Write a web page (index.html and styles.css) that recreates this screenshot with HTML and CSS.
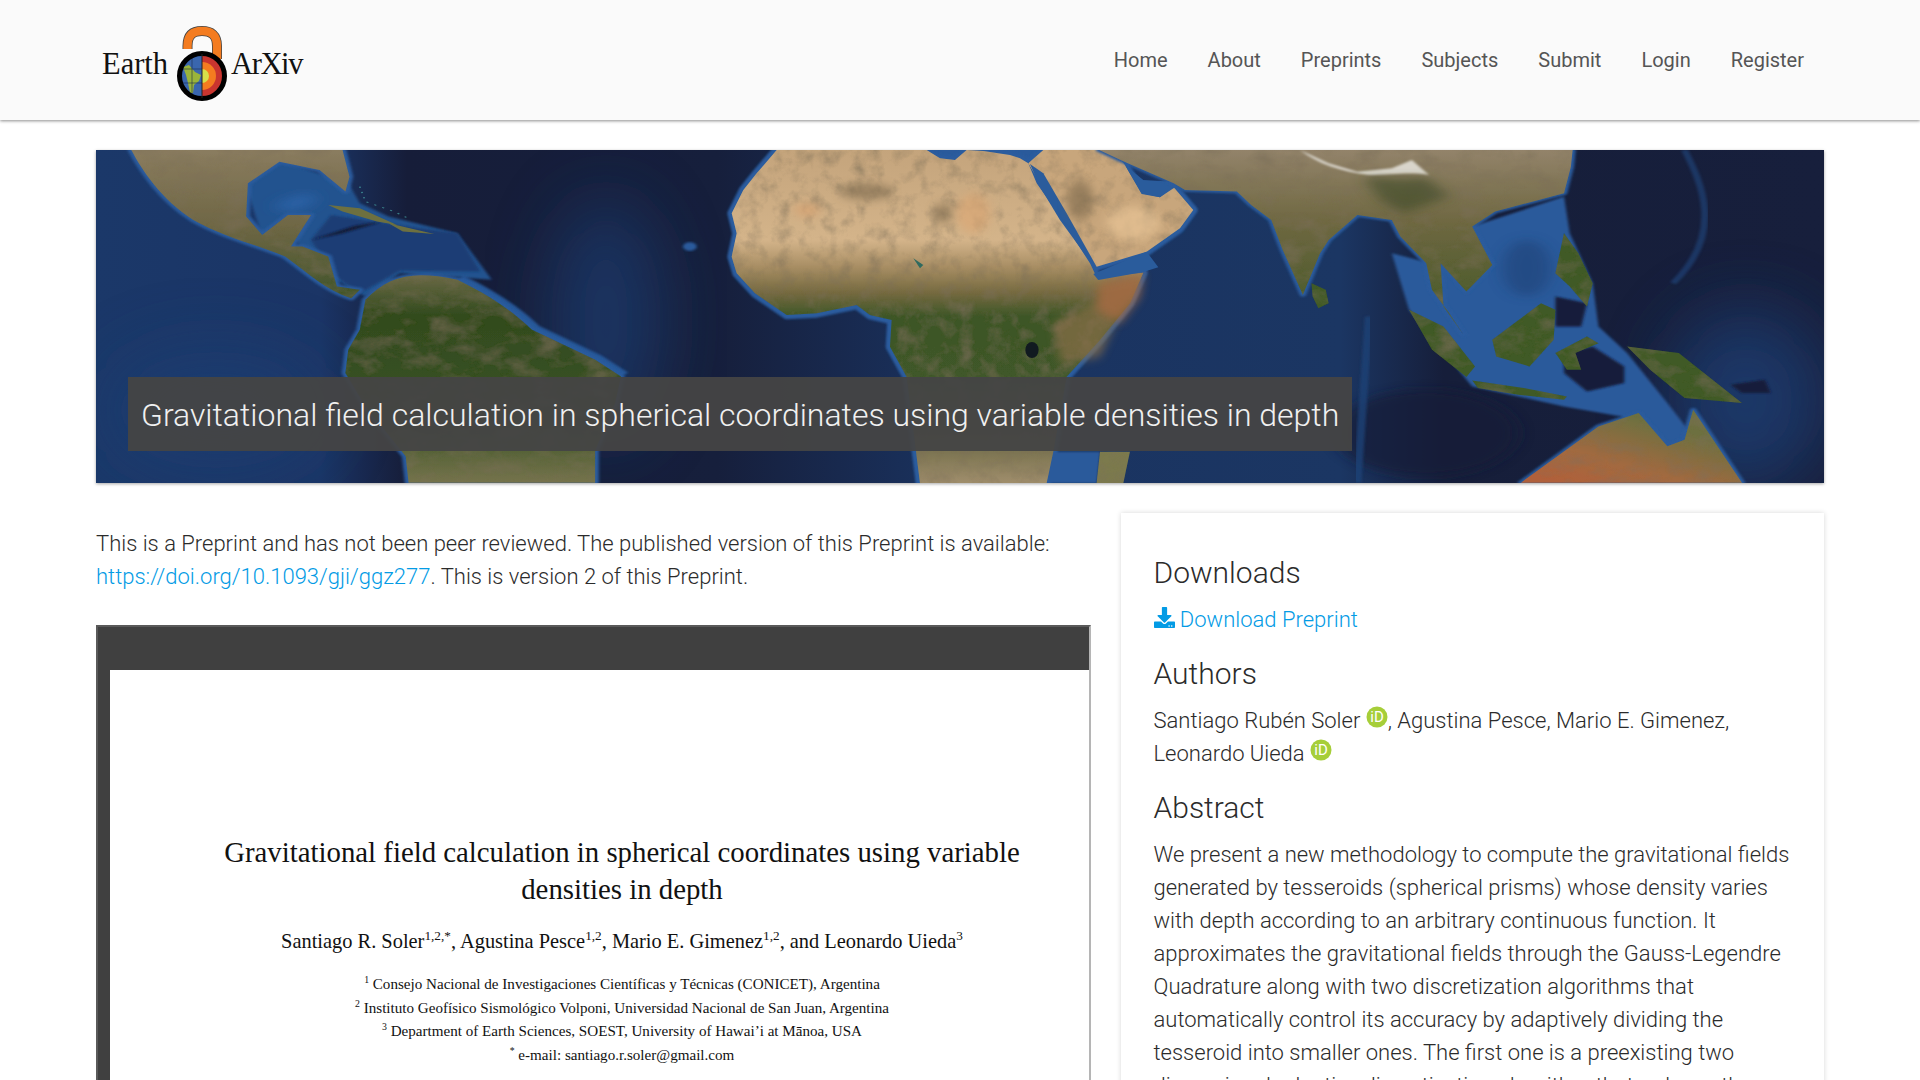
FILE: index.html
```html
<!DOCTYPE html>
<html lang="en">
<head>
    <meta charset="UTF-8">
    <meta name="viewport" content="width=device-width, initial-scale=1.0">
    <title>Gravitational field calculation in spherical coordinates using variable densities in depth</title>
    <link rel="stylesheet" href="styles.css">
</head>
<body>
    <header class="site-header">
        <a class="logo" href="#">
            <span class="logo-word">Earth</span>
            <svg class="logo-lock" viewBox="0 0 58 78" width="58" height="78">
                <path d="M14.5 24 V21 C14.5 10 20 6 29 6 C38 6 44 10 44 21 V34" fill="none" stroke="#444" stroke-width="10"/>
                <path d="M14.5 24 V21 C14.5 10 20 6 29 6 C38 6 44 10 44 21 V34" fill="none" stroke="#f47c20" stroke-width="8.4"/>
                <circle cx="29" cy="51" r="22" fill="#3a66ae"/>
                <path d="M29 29 A22 22 0 0 1 29 73 Z" fill="#c9352f"/>
                <path d="M29 37 A14 14 0 0 1 29 65 Z" fill="#f47c20"/>
                <path d="M29 44 A7 7 0 0 1 29 58 Z" fill="#d6e04a"/>
                <path d="M10 42 L16 40 L22 47 L28 50 L26 56 L21 60 L20 68 L17 68 L15 58 L13 50 Z" fill="#9ab43a"/>
                <path d="M19 30 V72 M7 44 H29 M7 58 H29" fill="none" stroke="#1d2c4c" stroke-width=".6"/>
                <circle cx="29" cy="51" r="22.5" fill="none" stroke="#000" stroke-width="5"/>
                <path d="M29 29 V73" stroke="#222" stroke-width="1"/>
            </svg>
            <span class="logo-word logo-word-tight">ArXiv</span>
        </a>
        <nav class="main-nav">
            <a href="#">Home</a>
            <a href="#">About</a>
            <a href="#">Preprints</a>
            <a href="#">Subjects</a>
            <a href="#">Submit</a>
            <a href="#">Login</a>
            <a href="#">Register</a>
        </nav>
    </header>

    <main class="page">
        <section class="banner">
            <svg class="banner-map" viewBox="0 0 1728 333" width="1728" height="333">
                <defs>
                    <linearGradient id="ocean" x1="0" x2="1" y1="0" y2="0">
                        <stop offset="0" stop-color="#1b3869"/>
                        <stop offset=".13" stop-color="#1b3566"/>
                        <stop offset=".18" stop-color="#161d39"/>
                        <stop offset=".36" stop-color="#161f3c"/>
                        <stop offset=".5" stop-color="#1a3360"/>
                        <stop offset=".72" stop-color="#1b3663"/>
                        <stop offset=".78" stop-color="#161e3a"/>
                        <stop offset="1" stop-color="#171f3c"/>
                    </linearGradient>
                    <linearGradient id="africaLand" gradientUnits="userSpaceOnUse" x1="0" x2="0" y1="0" y2="1000">
                        <stop offset="0" stop-color="#c4a47c"/>
                        <stop offset=".27" stop-color="#d4b48a"/>
                        <stop offset=".35" stop-color="#a88e64"/>
                        <stop offset=".43" stop-color="#74693f"/>
                        <stop offset=".5" stop-color="#3d5627"/>
                        <stop offset=".68" stop-color="#3f5829"/>
                        <stop offset=".9" stop-color="#7a7350"/>
                        <stop offset="1" stop-color="#a08e6c"/>
                    </linearGradient>
                    <linearGradient id="northLand" gradientUnits="userSpaceOnUse" x1="0" x2="0" y1="30" y2="480">
                        <stop offset="0" stop-color="#8a7c5f"/>
                        <stop offset=".5" stop-color="#6f6745"/>
                        <stop offset="1" stop-color="#3f5429"/>
                    </linearGradient>
                    <linearGradient id="southLand" gradientUnits="userSpaceOnUse" x1="0" x2="0" y1="400" y2="1029">
                        <stop offset="0" stop-color="#6d6a47"/>
                        <stop offset=".2" stop-color="#324b1e"/>
                        <stop offset=".7" stop-color="#3a5325"/>
                        <stop offset="1" stop-color="#75734c"/>
                    </linearGradient>
                    <linearGradient id="asiaLand" gradientUnits="userSpaceOnUse" x1="0" x2="0" y1="30" y2="480">
                        <stop offset="0" stop-color="#93836a"/>
                        <stop offset=".5" stop-color="#6d6740"/>
                        <stop offset="1" stop-color="#4d5c2c"/>
                    </linearGradient>
                    <linearGradient id="ozLand" gradientUnits="userSpaceOnUse" x1="1100" x2="1000" y1="820" y2="1029">
                        <stop offset="0" stop-color="#6d7040"/>
                        <stop offset=".6" stop-color="#a26a40"/>
                        <stop offset="1" stop-color="#b0613a"/>
                    </linearGradient>
                    <filter id="wide" x="-60%" y="-60%" width="220%" height="220%">
                        <feGaussianBlur stdDeviation="34"/>
                    </filter>
                    <filter id="soft" x="-30%" y="-30%" width="160%" height="160%">
                        <feGaussianBlur stdDeviation="14"/>
                    </filter>
                    <filter id="edge" x="-10%" y="-10%" width="120%" height="120%">
                        <feGaussianBlur stdDeviation="2.4"/>
                    </filter>
                    <filter id="grain" x="0" y="0" width="100%" height="100%">
                        <feGaussianBlur in="SourceGraphic" stdDeviation="1.2" result="s"/>
                        <feTurbulence type="fractalNoise" baseFrequency=".022" numOctaves="5" seed="7" result="n"/>
                        <feColorMatrix in="n" type="matrix" values="0 0 0 0 .2  0 0 0 0 .16  0 0 0 0 .1  .8 .8 0 0 -.72" result="c"/>
                        <feComposite in="c" in2="s" operator="in" result="t"/>
                        <feMerge>
                            <feMergeNode in="s"/>
                            <feMergeNode in="t"/>
                        </feMerge>
                    </filter>

                    <path id="northAm" d="M72 30 C90 90 125 180 180 240 C230 290 300 320 340 350 C380 400 410 450 455 475 L470 450 L430 440 L415 350 L370 320 L350 320 L385 225 L345 225 L300 285 L272 230 L275 130 L330 65 L400 90 L445 155 L452 110 L440 30 Z"/>
                    <path id="southAm" d="M480 480 C520 410 560 390 640 420 C700 470 740 520 770 570 L880 660 L925 710 L915 790 L880 933 L880 1029 L555 1029 L550 950 L480 800 L445 700 L450 630 L470 570 Z"/>
                    <path id="africa" d="M230 0 L170 70 L130 120 L95 190 L110 250 L95 320 L110 370 L165 430 L260 495 L350 490 L470 465 L510 495 L575 510 L570 590 L620 680 L660 1000 L1040 1000 L1060 905 L1100 680 L1200 570 L1290 460 L1330 368 L1190 382 L1170 340 L1080 200 L1010 100 L985 40 L960 25 L930 15 L850 3 L800 0 L765 30 L720 25 L680 0 Z"/>
                    <path id="arabia" d="M985 40 L1030 0 L1240 0 L1275 45 L1325 130 L1380 142 L1420 110 L1480 180 L1440 235 L1340 305 L1190 350 L1080 200 Z"/>
                    <path id="asia" d="M190 30 L240 70 L320 130 L340 150 L430 155 L455 195 L490 240 L510 330 L545 465 L575 340 L590 300 L640 225 L700 240 L715 290 L760 370 L770 450 L800 520 L825 585 L790 500 L785 370 L830 455 L875 375 L840 260 L880 215 L1000 160 L1012 80 L1015 30 Z"/>
                    <path id="islands" d="M560 430 L585 450 L590 490 L572 505 L562 470 Z M730 510 L790 560 L845 680 L830 712 L770 630 Z M840 722 L930 745 L1005 770 L1000 780 L920 765 L850 745 Z M875 600 L960 490 L985 510 L982 600 L940 680 L882 650 Z M985 640 L1040 590 L1060 610 L1020 640 L1030 690 L1005 690 Z M1000 280 L1025 340 L1050 430 L1040 500 L1010 440 L985 400 Z M1110 620 L1200 640 L1310 790 L1210 775 L1150 690 Z"/>
                    <path id="oz" d="M925 1029 L1060 860 L1130 820 L1180 920 L1210 900 L1225 810 L1310 1029 Z"/>
                </defs>

                <rect width="1728" height="333" fill="url(#ocean)"/>

                <!-- ocean floor, lighter bands -->
                <g fill="#1e3d72">
                    <ellipse cx="510" cy="170" rx="55" ry="120" opacity=".7" filter="url(#wide)"/>
                    <ellipse cx="1650" cy="250" rx="80" ry="90" opacity=".8" filter="url(#wide)"/>
                    <ellipse cx="120" cy="260" rx="110" ry="60" fill="#1d4075" opacity=".6" filter="url(#wide)"/>
                </g>

                <g transform="translate(-6,-10) scale(.574,.333)">
                    <path d="M270 130 L330 62 L450 130 L470 190 L520 230 L640 280 L700 420 L540 400 L480 470 L420 410 L365 320 L345 230 L300 290 Z" fill="#23528f" filter="url(#edge)"/>
                    <path d="M385 300 L420 225 L560 262 L640 280 L680 395 L540 392 L470 460 L420 400 Z" fill="#1b3d74" filter="url(#edge)"/>
                    <path d="M385 300 L460 258 L510 245 L440 280 Z" fill="#121a36" filter="url(#edge)"/>
                    <path d="M320 200 C350 165 385 150 395 175 C380 210 340 225 320 200Z" fill="#2c62a6" filter="url(#soft)"/>
                    <path d="M640 420 C700 470 740 520 770 570 L880 660 L925 710" fill="none" stroke="#28589a" stroke-width="34" filter="url(#edge)"/>
                    <g fill="none" stroke="#2a5c9e" stroke-width="13" stroke-linejoin="round" filter="url(#edge)">
                        <use href="#northAm"/>
                        <use href="#southAm"/>
                    </g>
                    <g filter="url(#grain)">
                        <use href="#northAm" fill="url(#northLand)"/>
                        <use href="#southAm" fill="url(#southLand)"/>
                    </g>
                    <path d="M415 195 L470 205 L535 255 L500 245 L440 215 Z M520 250 L600 282 L545 275 Z" fill="#6d7040"/>
                    <path d="M470 140 L480 185 L530 215 L560 240" fill="none" stroke="#48a8a8" stroke-width="3" stroke-dasharray="4 12" opacity=".7"/>
                    <ellipse cx="1045" cy="320" rx="12" ry="13" fill="#2a5a9b" filter="url(#edge)"/>
                </g>

                <!-- africa and arabia -->
                <g transform="translate(604,0) scale(.3333)">
                    <path d="M660 0 H1040 V30 H680 Z" fill="#2a5a9b"/>
                    <g fill="none" stroke="#2a5c9e" stroke-width="26" stroke-linejoin="round" filter="url(#edge)">
                        <use href="#africa"/>
                        <use href="#arabia"/>
                    </g>
                    <path d="M1040 905 L1200 905 L1190 1000 L1040 1000 Z" fill="#2a5a9b" filter="url(#edge)"/>
                    <g filter="url(#grain)">
                        <use href="#africa" fill="url(#africaLand)"/>
                        <use href="#arabia" fill="#c8a67b"/>
                        <path d="M1200 905 L1290 905 L1270 1000 L1190 1000 Z" fill="#7b7a4d"/>
                    </g>
                    <path d="M1060 520 L1300 400 L1200 620 L1080 640 Z" fill="#8a7048" opacity=".7" filter="url(#soft)"/>
                    <path d="M1195 400 L1330 368 L1320 440 L1260 520 L1190 480 Z" fill="#a56a42" opacity=".8" filter="url(#soft)"/>
                    <path d="M990 42 L1030 70 L1100 190 L1190 350 L1160 320 L1080 210 L1020 110 Z" fill="#2a5c9c"/>
                    <path d="M1180 372 L1340 305 L1375 352 L1330 366 L1195 390 Z" fill="#2a5c9c"/>
                    <path d="M1275 45 L1330 90 L1420 95 L1425 112 L1380 142 L1325 132 Z" fill="#2a5c9c"/>
                    <ellipse cx="996" cy="600" rx="20" ry="24" fill="#111a20"/>
                    <path d="M640 325 L670 345 L660 355 Z" fill="#2f6a5f"/>
                    <g filter="url(#soft)" fill="#6f5f45" opacity=".55">
                        <ellipse cx="500" cy="125" rx="80" ry="24"/>
                        <ellipse cx="730" cy="190" rx="30" ry="30"/>
                        <ellipse cx="1140" cy="150" rx="40" ry="60"/>
                    </g>
                    <g filter="url(#soft)" fill="#e9c596" opacity=".7">
                        <ellipse cx="820" cy="190" rx="50" ry="60" fill="#dba876"/>
                        <ellipse cx="1300" cy="220" rx="80" ry="50"/>
                        <ellipse cx="320" cy="180" rx="40" ry="18" fill="#d9a26f"/>
                    </g>
                </g>

                <!-- asia, indonesia, australia -->
                <g transform="translate(894,-10) scale(.574,.333)">
                    <ellipse cx="760" cy="880" rx="160" ry="130" fill="#151d38" opacity=".7" filter="url(#soft)"/>
                    <path d="M660 530 L640 1029" fill="none" stroke="#1f4277" stroke-width="14" opacity=".8" filter="url(#edge)"/>
                    <path d="M700 340 L790 380 L840 260 L1000 170 L1010 280 L1050 430 L1060 560 L1110 640 L1180 790 L1230 900 L1180 930 L1100 830 L1000 800 L840 740 L730 510 Z" fill="#2a5a9b" filter="url(#edge)"/>
                    <ellipse cx="935" cy="385" rx="42" ry="85" fill="#1e3c70" opacity=".5" filter="url(#soft)"/>
                    <path d="M1000 640 L1050 620 L1105 680 L1105 730 L1040 755 L1000 700 Z M985 470 L1040 490 L1030 560 L985 560 Z M1290 735 L1350 720 L1360 760 L1310 760 Z" fill="#151c3a" filter="url(#edge)"/>
                    <path d="M1210 30 C1240 130 1280 280 1190 430" fill="none" stroke="#24508c" stroke-width="12" opacity=".5" filter="url(#edge)"/>
                    <g fill="none" stroke="#2a5c9e" stroke-width="11" stroke-linejoin="round" filter="url(#edge)">
                        <use href="#asia"/>
                        <use href="#oz"/>
                    </g>
                    <g filter="url(#grain)">
                        <use href="#asia" fill="url(#asiaLand)"/>
                        <use href="#islands" fill="#3f5a28"/>
                        <use href="#oz" fill="url(#ozLand)"/>
                    </g>
                    <path d="M540 30 C570 70 610 95 660 105 C700 105 730 95 765 105 L735 60 L700 85 L640 95 L590 70 Z" fill="#d9d5cb" filter="url(#edge)"/>
                    <path d="M650 110 C700 115 730 120 760 110 L800 170 L720 220 L680 180 Z" fill="#2e3f1f" opacity=".5" filter="url(#soft)"/>
                </g>
            </svg>
            <h1 class="banner-title">Gravitational field calculation in spherical coordinates using variable densities in depth</h1>
        </section>

        <div class="columns">
            <div class="main-col">
                <p class="notice">This is a Preprint and has not been peer reviewed. The published version of this Preprint is available: <a href="#">https://doi.org/10.1093/gji/ggz277</a>. This is version 2 of this Preprint.</p>
                <div class="pdf-viewer">
                    <div class="pdf-page">
                        <h2 class="pdf-title">Gravitational field calculation in spherical coordinates using variable<br>densities in depth</h2>
                        <p class="pdf-authors">Santiago R. Soler<sup>1,2,*</sup>, Agustina Pesce<sup>1,2</sup>, Mario E. Gimenez<sup>1,2</sup>, and Leonardo Uieda<sup>3</sup></p>
                        <ul class="pdf-affils">
                            <li><sup>1</sup> Consejo Nacional de Investigaciones Científicas y Técnicas (CONICET), Argentina</li>
                            <li><sup>2</sup> Instituto Geofísico Sismológico Volponi, Universidad Nacional de San Juan, Argentina</li>
                            <li><sup>3</sup> Department of Earth Sciences, SOEST, University of Hawai’i at Mānoa, USA</li>
                            <li><sup>*</sup> e-mail: santiago.r.soler@gmail.com</li>
                        </ul>
                    </div>
                </div>
            </div>

            <aside class="side-card">
                <h3>Downloads</h3>
                <p class="download-row">
                    <a href="#">
                        <svg class="download-icon" viewBox="0 0 512 512" width="21" height="21"><path fill="currentColor" d="M216 0h80c13.3 0 24 10.7 24 24v168h87.7c17.8 0 26.7 21.5 14.1 34.1L269.7 378.3c-7.5 7.5-19.8 7.5-27.3 0L90.1 226.1c-12.6-12.6-3.7-34.1 14.1-34.1H192V24c0-13.3 10.7-24 24-24zm296 376v112c0 13.3-10.7 24-24 24H24c-13.3 0-24-10.7-24-24V376c0-13.3 10.7-24 24-24h146.7l49 49c20.1 20.1 52.5 20.1 72.6 0l49-49H488c13.3 0 24 10.7 24 24zm-124 88c0-11-9-20-20-20s-20 9-20 20 9 20 20 20 20-9 20-20zm64 0c0-11-9-20-20-20s-20 9-20 20 9 20 20 20 20-9 20-20z"/></svg>
                        Download Preprint
                    </a>
                </p>
                <h3>Authors</h3>
                <p class="authors">Santiago Rubén Soler <svg class="orcid" viewBox="0 0 22 22" width="22" height="22"><circle cx="11" cy="11" r="10.5" fill="#a6ce39"/><text x="11" y="16" text-anchor="middle" class="orcid-text">iD</text></svg>, Agustina Pesce, Mario E. Gimenez, Leonardo Uieda <svg class="orcid" viewBox="0 0 22 22" width="22" height="22"><circle cx="11" cy="11" r="10.5" fill="#a6ce39"/><text x="11" y="16" text-anchor="middle" class="orcid-text">iD</text></svg></p>
                <h3>Abstract</h3>
                <p class="abstract">We present a new methodology to compute the gravitational fields generated by tesseroids (spherical prisms) whose density varies with depth according to an arbitrary continuous function. It approximates the gravitational fields through the Gauss-Legendre Quadrature along with two discretization algorithms that automatically control its accuracy by adaptively dividing the tesseroid into smaller ones. The first one is a preexisting two dimensional adaptive discretization algorithm that reduces the</p>
            </aside>
        </div>
    </main>
</body>
</html>
```

FILE: styles.css
```css
html, body {
    margin: 0;
    height: 1080px;
    overflow: hidden;
}
body {
    font-family: Roboto, 'Liberation Sans', sans-serif;
    font-weight: 300;
    font-size: 22px;
    line-height: 33px;
    color: #2b2b2b;
    background-color: #ffffff;
}
a {
    color: #039be5;
    text-decoration: none;
}
.site-header {
    height: 120px;
    box-sizing: border-box;
    padding: 0 96px 0 102px;
    display: flex;
    align-items: center;
    justify-content: space-between;
    background-color: #fafafa;
    box-shadow: 0 1px 3px rgba(0, 0, 0, 0.45);
}
.logo {
    display: flex;
    align-items: center;
    color: #111111;
    padding-top: 8px;
}
.logo-word {
    font-family: 'Liberation Serif', serif;
    font-weight: 400;
    font-size: 30.5px;
    line-height: 36px;
}
.logo-word-tight {
    letter-spacing: -1.4px;
}
.logo-lock {
    margin: 0 0 0 5px;
}
.main-nav {
    display: flex;
}
.main-nav a {
    padding: 0 20px;
    font-size: 20px;
    font-weight: 400;
    color: #555555;
}
.page {
    padding: 30px 96px 0;
}
.banner {
    position: relative;
    height: 333px;
    box-shadow: 0 1px 3px rgba(0, 0, 0, 0.35);
}
.banner-map {
    display: block;
}
.banner-title {
    position: absolute;
    left: 32px;
    top: 227px;
    margin: 0;
    padding: 0 13px;
    height: 74px;
    line-height: 76px;
    font-size: 32px;
    font-weight: 300;
    color: #f0f0f0;
    white-space: nowrap;
    background-color: rgba(68, 68, 68, 0.95);
}
.columns {
    display: grid;
    grid-template-columns: 995px 703px;
    justify-content: space-between;
    margin-top: 30px;
}
.notice {
    margin: 14px 0 0;
}
.pdf-viewer {
    margin-top: 32px;
    height: 460px;
    box-sizing: border-box;
    padding: 43px 0 0 12px;
    background-color: #404040;
    border-top: 2px solid #5a5a5a;
    border-left: 2px solid #5a5a5a;
    border-right: 2px solid #b5b5b5;
}
.pdf-page {
    height: 100%;
    box-sizing: border-box;
    padding: 164px 0 0 45px;
    background-color: #ffffff;
    font-family: 'Liberation Serif', serif;
    font-weight: 400;
    color: #111111;
    text-align: center;
}
.pdf-page sup {
    font-size: 65%;
    line-height: 0;
}
.pdf-title {
    margin: 0;
    font-size: 28.8px;
    line-height: 37px;
    font-weight: 400;
}
.pdf-authors {
    margin: 18px 0 0;
    font-size: 20.4px;
    line-height: 30px;
}
.pdf-affils {
    margin: 17px 0 0;
    padding: 0;
    list-style: none;
    font-size: 15.1px;
    line-height: 23.7px;
}
.side-card {
    height: 700px;
    box-sizing: border-box;
    padding: 35px 32px 0 32.5px;
    background-color: #ffffff;
    box-shadow: 0 0 5px rgba(0, 0, 0, 0.16);
}
.side-card h3 {
    margin: 0;
    font-size: 30px;
    line-height: 50px;
    font-weight: 300;
    color: #2b2b2b;
}
.side-card p {
    margin: 5px 0 13px;
}
.download-icon {
    vertical-align: -1px;
}
.orcid {
    margin: -8px 0;
    vertical-align: 8px;
}
.orcid-text {
    font-family: Roboto, sans-serif;
    font-weight: 400;
    font-size: 15px;
    fill: #ffffff;
}
```
